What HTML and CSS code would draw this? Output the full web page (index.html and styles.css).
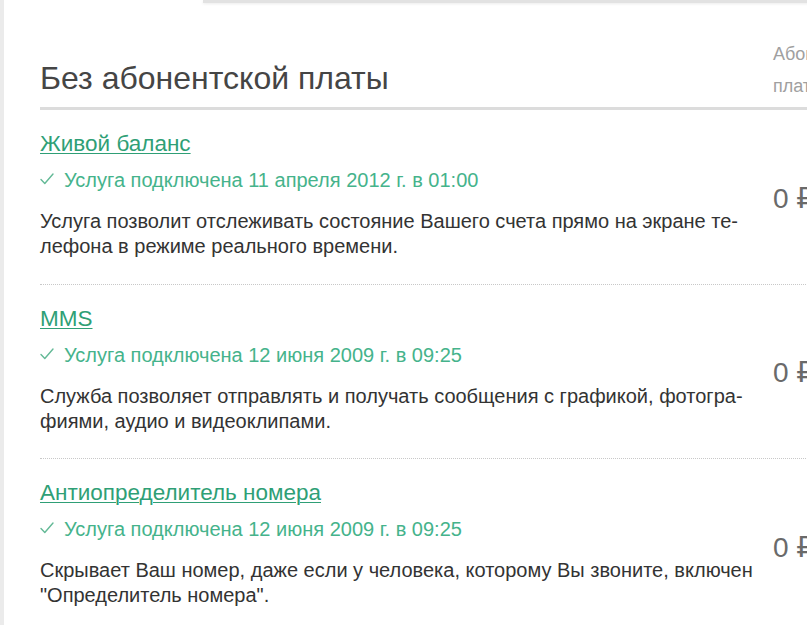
FILE: index.html
```html
<!DOCTYPE html>
<html lang="ru">
<head>
<meta charset="utf-8">
<title>Без абонентской платы</title>
<link rel="stylesheet" href="styles.css">
</head>
<body>
<div class="page">
  <div class="topbar"></div>
  <div class="content">
    <div class="head-row">
      <h2 class="title">Без абонентской платы</h2>
      <div class="col-head">Абонентская<br>плата</div>
    </div>

    <div class="service">
      <div class="info">
        <a class="name" href="#">Живой баланс</a>
        <div class="status"><svg class="tick" viewBox="0 0 14 12" width="14" height="12"><polyline points="1,6.5 4.8,10.5 13,1" /></svg>Услуга подключена 11 апреля 2012 г. в 01:00</div>
        <p class="desc">Услуга позволит отслеживать состояние Вашего счета прямо на экране те&shy;лефона в режиме реального времени.</p>
      </div>
      <div class="price">0 ₽</div>
    </div>

    <div class="service">
      <div class="info">
        <a class="name" href="#">MMS</a>
        <div class="status"><svg class="tick" viewBox="0 0 14 12" width="14" height="12"><polyline points="1,6.5 4.8,10.5 13,1" /></svg>Услуга подключена 12 июня 2009 г. в 09:25</div>
        <p class="desc">Служба позволяет отправлять и получать сообщения с графикой, фотогра&shy;фиями, аудио и видеоклипами.</p>
      </div>
      <div class="price">0 ₽</div>
    </div>

    <div class="service">
      <div class="info">
        <a class="name" href="#">Антиопределитель номера</a>
        <div class="status"><svg class="tick" viewBox="0 0 14 12" width="14" height="12"><polyline points="1,6.5 4.8,10.5 13,1" /></svg>Услуга подключена 12 июня 2009 г. в 09:25</div>
        <p class="desc">Скрывает Ваш номер, даже если у человека, которому Вы звоните, включен "Определитель номера".</p>
      </div>
      <div class="price">0 ₽</div>
    </div>
  </div>
</div>
</body>
</html>
```

FILE: styles.css
```css
html, body {
  margin: 0;
  padding: 0;
  overflow: hidden;
  background: #ffffff;
}

body {
  font-family: "Liberation Sans", "DejaVu Sans", Arial, sans-serif;
  color: #333333;
}

.page {
  min-height: 625px;
  border-left: 4px solid #ebebeb;
  width: 860px;
}

.topbar {
  margin-left: 199px;
  height: 3px;
  background: #e2e2e2;
  box-shadow: 0 1px 3px rgba(0, 0, 0, 0.08);
}

.content {
  padding: 35px 0 0 36px;
}

.head-row {
  display: flex;
  align-items: flex-end;
  border-bottom: 3px solid #dcdcdc;
}

.title {
  flex: 0 0 733px;
  margin: 0;
  padding-bottom: 9px;
  font-size: 32px;
  line-height: 40px;
  font-weight: normal;
  color: #454545;
}

.col-head {
  padding-bottom: 5px;
  font-size: 18px;
  line-height: 32px;
  color: #a0a0a0;
  white-space: nowrap;
}

.service {
  display: flex;
  align-items: center;
  padding: 21px 0 24.5px;
  border-bottom: 1px dotted #c8c8c8;
}

.info {
  flex: 0 0 724px;
  margin-right: 9px;
}

.name {
  display: inline-block;
  font-size: 22.5px;
  line-height: 25px;
  color: #2f9f76;
  text-decoration: underline;
  text-decoration-thickness: 1px;
  text-underline-offset: 2px;
}

.status {
  display: flex;
  align-items: center;
  margin-top: 12px;
  font-size: 20px;
  line-height: 24px;
  color: #45b38b;
}

.tick {
  flex: 0 0 auto;
  margin: 0 10px 2px 0;
  fill: none;
  stroke: #63b996;
  stroke-width: 1.4;
  stroke-linecap: round;
  stroke-linejoin: round;
}

.desc {
  margin: 17px 0 0;
  font-size: 20px;
  line-height: 25px;
  color: #333333;
}

.price {
  font-size: 28px;
  color: #6a6a6a;
  white-space: nowrap;
  margin-top: 6px;
}
```
